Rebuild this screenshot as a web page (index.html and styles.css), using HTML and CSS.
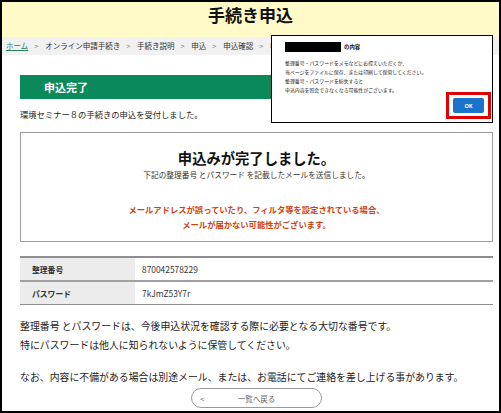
FILE: index.html
```html
<!DOCTYPE html>
<html lang="ja">
<head>
<meta charset="utf-8">
<title>手続き申込</title>
<link rel="stylesheet" href="styles.css">
</head>
<body>
<div class="frame">
  <header class="site-header"><h1 class="site-title">手続き申込</h1></header>
  <nav class="crumbs">
    <a class="crumb-link" href="#">ホーム</a><span class="sep">&gt;</span>
    <span>オンライン申請手続き</span><span class="sep">&gt;</span>
    <span>手続き説明</span><span class="sep">&gt;</span>
    <span>申込</span><span class="sep">&gt;</span>
    <span>申込確認</span><span class="sep">&gt;</span>
    <span>申込完了</span>
  </nav>
  <main class="content">
    <h2 class="section-bar">申込完了</h2>
    <p class="lead">環境セミナー８の手続きの申込を受付しました。</p>
    <div class="done-box">
      <p class="done-title">申込みが完了しました。</p>
      <p class="done-sub">下記の整理番号 とパスワード を記載したメールを送信しました。</p>
      <p class="done-warn">メールアドレスが誤っていたり、フィルタ等を設定されている場合、<br>メールが届かない可能性がございます。</p>
    </div>
    <table class="info">
      <tr><th>整理番号</th><td>870042578229</td></tr>
      <tr><th>パスワード</th><td>7kJmZ53Y7r</td></tr>
    </table>
    <p class="note">整理番号 とパスワードは、今後申込状況を確認する際に必要となる大切な番号です。<br>特にパスワードは他人に知られないように保管してください。</p>
    <p class="note note-gap">なお、内容に不備がある場合は別途メール、または、お電話にてご連絡を差し上げる事があります。</p>
    <div class="back-wrap"><a class="back-btn" href="#"><span class="back-arrow">&lt;</span><span class="back-label">一覧へ戻る</span></a></div>
  </main>
  <div class="dialog">
    <div class="dialog-head"><span class="redacted"></span><span class="dialog-title">の内容</span></div>
    <p class="dialog-text">整理番号・パスワードをメモなどにお控えいただくか、<br>当ページをファイルに保存、または印刷して保管してください。<br>整理番号・パスワードを紛失すると<br>申込内容を照会できなくなる可能性がございます。</p>
    <div class="dialog-actions"><div class="highlight"><button class="ok-btn">OK</button></div></div>
  </div>
</div>
</body>
</html>
```
FILE: styles.css
```css
html, body {
  margin: 0;
  padding: 0;
  background: #fff;
}
body {
  font-family: "Noto Sans CJK JP", "Noto Sans", sans-serif;
  color: #222;
}
p { margin: 0; }
.frame {
  position: relative;
  width: 501px;
  height: 413px;
  box-sizing: border-box;
  border: 2px solid #000;
  overflow: hidden;
}
.site-header {
  background: #fffac8;
  height: 35px;
  box-sizing: border-box;
  padding-top: 1px;
}
.site-title {
  margin: 0;
  text-align: center;
  font-size: 17px;
  line-height: 24px;
  font-weight: 700;
  color: #111;
}
.crumbs {
  background: #f1f1f1;
  height: 18px;
  line-height: 18px;
  font-size: 7.5px;
  color: #333;
  padding-left: 4px;
  white-space: nowrap;
}
.crumb-link { color: #2b7d62; }
.sep { color: #888; margin: 0 5px 0 6px; }
.content {
  padding: 0 6px 0 18px;
}
.section-bar {
  margin: 20px 0 0;
  height: 24px;
  line-height: 24px;
  background: #0a8a5a;
  color: #fff;
  font-size: 11px;
  font-weight: 700;
  padding-left: 24px;
}
.lead {
  margin-top: 8px;
  font-size: 8.3px;
  line-height: 14px;
}
.done-box {
  margin-top: 11px;
  border: 1px solid #9c9c9c;
  padding: 15px 0 9px;
  text-align: center;
}
.done-title {
  font-size: 14.3px;
  font-weight: 700;
  line-height: 20px;
  color: #111;
}
.done-sub {
  margin-top: 1px;
  font-size: 7.7px;
  line-height: 12px;
  color: #333;
}
.done-warn {
  margin-top: 21px;
  font-size: 8.3px;
  font-weight: 700;
  line-height: 15px;
  color: #cf4310;
}
.info {
  margin-top: 14px;
  width: 100%;
  border-collapse: collapse;
  border-top: 2px solid #8e8e8e;
  border-bottom: 1px solid #8e8e8e;
}
.info tr + tr { border-top: 2px solid #a0a0a0; }
.info th {
  width: 103px;
  background: #ececec;
  text-align: left;
  padding: 0 0 0 12px;
  height: 22px;
  font-size: 7.8px;
  font-weight: 700;
  color: #333;
}
.info td {
  padding: 0 0 0 7px;
  font-size: 8.4px;
  color: #333;
}
.note {
  margin-top: 12px;
  font-size: 9.9px;
  line-height: 19px;
  color: #222;
}
.note-gap { margin-top: 13px; }
.back-wrap {
  display: flex;
  justify-content: center;
  margin-top: 1px;
}
.back-btn {
  display: grid;
  grid-template-columns: 22px 1fr 22px;
  align-items: center;
  width: 131px;
  height: 20px;
  box-sizing: border-box;
  border: 1px solid #9a9a9a;
  border-radius: 10px;
  text-decoration: none;
  color: #666;
  font-size: 7.5px;
}
.back-arrow { padding-left: 8px; font-size: 8px; }
.back-label { text-align: center; }
.dialog {
  position: absolute;
  left: 269px;
  top: 33px;
  width: 222px;
  height: 88px;
  box-sizing: border-box;
  background: #fff;
  border: 1px solid #000;
  padding: 6px 0 0 13px;
}
.dialog-head {
  display: flex;
  align-items: center;
  height: 10px;
}
.redacted {
  display: block;
  width: 56px;
  height: 10px;
  background: #000;
}
.dialog-title {
  font-size: 5.4px;
  font-weight: 700;
  margin-left: 3px;
  color: #111;
}
.dialog-text {
  margin-top: 6px;
  font-size: 4.9px;
  line-height: 9px;
  color: #222;
}
.dialog-actions {
  display: flex;
  justify-content: flex-end;
  padding-right: 1px;
  margin-top: -2px;
}
.highlight {
  border: 3px solid #e00000;
  padding: 3px 4px;
}
.ok-btn {
  display: block;
  width: 31px;
  height: 15px;
  border: 0;
  border-radius: 2px;
  background: #1a74cc;
  color: #fff;
  font-family: "Noto Sans", sans-serif;
  font-size: 5.5px;
  font-weight: 700;
  padding: 0;
}
```
